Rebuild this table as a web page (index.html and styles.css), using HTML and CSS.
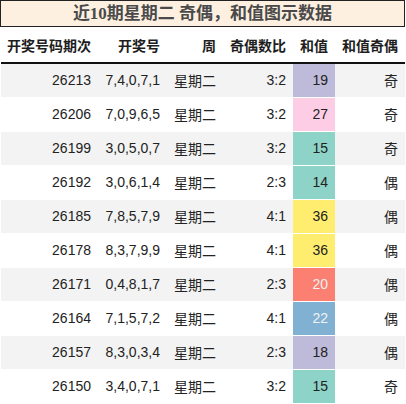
FILE: index.html
```html
<!DOCTYPE html>
<html lang="zh">
<head>
    <meta charset="UTF-8">
    <title>近10期星期二 奇偶，和值图示数据</title>
    <link rel="stylesheet" href="styles.css">
</head>
<body>
    <div class="caption">近10期星期二 奇偶，和值图示数据</div>
    <table class="data">
        <colgroup>
            <col class="w-issue">
            <col class="w-nums">
            <col class="w-week">
            <col class="w-ratio">
            <col class="w-sum">
            <col class="w-parity">
        </colgroup>
        <thead>
            <tr>
                <th>开奖号码期次</th>
                <th>开奖号</th>
                <th>周</th>
                <th>奇偶数比</th>
                <th>和值</th>
                <th>和值奇偶</th>
            </tr>
        </thead>
        <tbody>
            <tr><td>26213</td><td>7,4,0,7,1</td><td>星期二</td><td>3:2</td><td class="sum lav">19</td><td>奇</td></tr>
            <tr><td>26206</td><td>7,0,9,6,5</td><td>星期二</td><td>3:2</td><td class="sum pink">27</td><td>奇</td></tr>
            <tr><td>26199</td><td>3,0,5,0,7</td><td>星期二</td><td>3:2</td><td class="sum teal">15</td><td>奇</td></tr>
            <tr><td>26192</td><td>3,0,6,1,4</td><td>星期二</td><td>2:3</td><td class="sum teal">14</td><td>偶</td></tr>
            <tr><td>26185</td><td>7,8,5,7,9</td><td>星期二</td><td>4:1</td><td class="sum yellow">36</td><td>偶</td></tr>
            <tr><td>26178</td><td>8,3,7,9,9</td><td>星期二</td><td>4:1</td><td class="sum yellow">36</td><td>偶</td></tr>
            <tr><td>26171</td><td>0,4,8,1,7</td><td>星期二</td><td>2:3</td><td class="sum salmon">20</td><td>偶</td></tr>
            <tr><td>26164</td><td>7,1,5,7,2</td><td>星期二</td><td>4:1</td><td class="sum blue">22</td><td>偶</td></tr>
            <tr><td>26157</td><td>8,3,0,3,4</td><td>星期二</td><td>2:3</td><td class="sum lav">18</td><td>偶</td></tr>
            <tr><td>26150</td><td>3,4,0,7,1</td><td>星期二</td><td>3:2</td><td class="sum teal">15</td><td>奇</td></tr>
        </tbody>
    </table>
</body>
</html>
```

FILE: styles.css
```css
/* Base */
* {
    box-sizing: border-box;
}

body {
    margin: 0;
    background: #fff;
    font-family: "Liberation Sans", "Noto Sans CJK SC", sans-serif;
    font-size: 14px;
    color: #222;
}

/* Title bar */
.caption {
    width: 405px;
    height: 27px;
    border: 1px solid #222;
    background-color: #fdf0e1;
    color: #4a4a4a;
    font-family: "Liberation Serif", "Noto Sans CJK SC", serif;
    font-weight: bold;
    font-size: 17px;
    line-height: 25px;
    text-align: center;
}

/* Table */
.data {
    margin-left: 1px;
    width: 404px;
    table-layout: fixed;
    border-collapse: collapse;
}

.w-issue { width: 97px; }
.w-nums { width: 69px; }
.w-week { width: 56px; }
.w-ratio { width: 70px; }
.w-sum { width: 42px; }
.w-parity { width: 70px; }

.data th,
.data td {
    padding: 0 7px 0 0;
    text-align: right;
    white-space: nowrap;
}

.data th {
    height: 36px;
    font-weight: bold;
    color: #1e1e1e;
    border-bottom: 2px solid #111;
}

.data td {
    height: 34px;
    border-bottom: 1px solid #fff;
}

.data tbody tr:nth-child(odd) {
    background-color: #f3f3f3;
}

/* Sum colours */
.sum.lav { background-color: #bebada; }
.sum.pink { background-color: #fccde5; }
.sum.teal { background-color: #8dd3c7; }
.sum.yellow { background-color: #ffed6f; }
.sum.salmon { background-color: #fb8072; color: #f1f1f1; }
.sum.blue { background-color: #80b1d3; color: #f1f1f1; }
```
